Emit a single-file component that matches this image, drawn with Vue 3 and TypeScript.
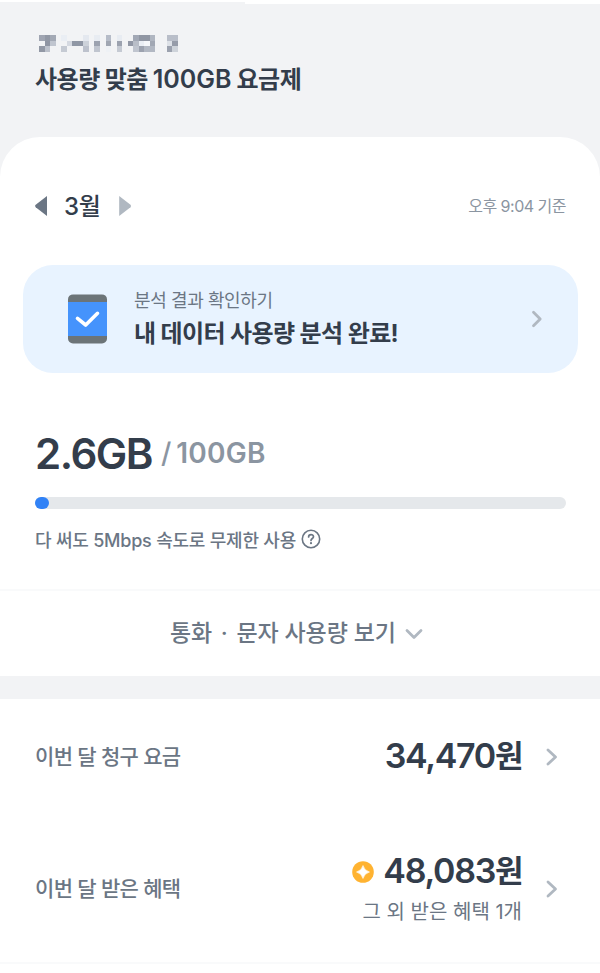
<script setup lang="ts">
const _ = '#f2f3f5'
const mosaic: string[][] = [
  ['#a0a5b2', '#9298a5', '#a3a9b5', _, '#eaeef4', _, _, _, '#e4e8ef', _, '#e8ecf2', _, '#b6bcc8', _, '#e8ecf2', _, _, '#a2a8b5', '#9096a3', '#9096a3', '#b0b6c1', _, _, '#b9bec9', '#b9bec9'],
  [_, '#8f95a3', '#c0c5cf', _, _, '#d5d9e1', '#9097a5', '#9097a5', '#cdd2da', _, '#9ca2af', _, '#a0a6b2', _, '#9ca2af', _, '#9298a6', '#b9bec8', '#eaeef4', '#f5f7fa', '#a2a8b4', _, _, '#dde1e7', '#969ca9'],
  ['#9298a5', '#bcc1cb', _, _, '#c5cad3', _, _, _, '#bdc2cd', _, '#c0c5cf', _, '#eef1f5', _, '#c5cad3', _, _, '#c0c5cf', '#9ca2af', '#b2b8c3', '#b2b8c3', _, _, '#9ca2af', '#ced3da'],
]
const used = 2.6
const total = 100
</script>

<template>
  <main class="screen">
    <header class="top">
      <div class="top-edge"></div>
      <div class="mosaic">
        <template v-for="(row, r) in mosaic" :key="r">
          <i v-for="(c, k) in row" :key="k" :style="{ background: c }"></i>
        </template>
      </div>
      <h1 class="plan">사용량 맞춤 <span class="plan-size">100GB</span> 요금제</h1>
    </header>

    <section class="usage">
      <div class="month-row">
        <svg width="13" height="20" viewBox="0 0 13 20"><path d="M12 0v20L.7 11.200q-1.200-1.200 0-2.400z" fill="#6b7684" /></svg>
        <span class="month">3월</span>
        <svg width="13" height="20" viewBox="0 0 13 20"><path d="M.2 0v20l11.300-8.800q1.200-1.200 0-2.400z" fill="#b0b8c1" /></svg>
        <span class="time">오후 9:04 기준</span>
      </div>

      <div class="banner">
        <svg width="40" height="50" viewBox="0 0 40 50">
          <rect x="0" y=".4" width="39" height="49" rx="5" fill="#6c7478" />
          <rect x="0" y="8" width="39" height="34" fill="#4593fc" />
          <path d="M9.500 24.300l8.200 6.700L29.500 19.300" fill="none" stroke="#fff" stroke-width="3.600" stroke-linecap="round" stroke-linejoin="round" />
        </svg>
        <div class="banner-text">
          <span class="banner-sub">분석 결과 확인하기</span>
          <strong class="banner-title">내 데이터 사용량 분석 완료!</strong>
        </div>
        <svg class="chev" width="12" height="18" viewBox="0 0 12 18"><path d="M2.500 2.300l6.700 6.700-6.700 6.700" /></svg>
      </div>

      <div class="amount"><strong class="used">{{ used }}GB</strong><span class="slash">/</span><span class="total">{{ total }}GB</span></div>
      <div class="bar"><div class="fill" :style="{ width: (used / total) * 100 + '%' }"></div></div>
      <div class="note">
        <span class="note-text">다 써도 5Mbps 속도로 무제한 사용</span>
        <svg width="20" height="20" viewBox="0 0 20 20" fill="none" stroke="#6b7684" stroke-linecap="round">
          <circle cx="10" cy="10" r="8.700" stroke-width="1.600" />
          <path d="M7.600 8c0-3.200 4.900-3 4.900-.2C12.500 9.500 10 9.600 10 11.500" stroke-width="1.700" />
          <circle cx="10" cy="14.200" r=".5" stroke-width="1.200" />
        </svg>
      </div>
    </section>

    <div class="more">
      <span class="more-text">통화<span class="dot">·</span>문자 사용량 보기</span>
      <svg class="chev" width="18" height="12" viewBox="0 0 18 12"><path d="M2 2.500l7 7 7-7" /></svg>
    </div>

    <div class="gap"></div>

    <div class="row bill">
      <span class="label">이번 달 청구 요금</span>
      <strong class="price">34,470<span class="won">원</span></strong>
      <svg class="chev" width="12" height="18" viewBox="0 0 12 18"><path d="M2 2l7.500 7L2 16" /></svg>
    </div>

    <div class="row benefit">
      <span class="label">이번 달 받은 혜택</span>
      <div class="benefit-val">
        <div class="benefit-top">
          <svg width="22" height="22" viewBox="0 0 22 22">
            <circle cx="11" cy="11" r="10.800" fill="#ffb331" />
            <path d="M11 4.500Q12.400 9.600 17.500 11 12.400 12.400 11 17.500 9.600 12.400 4.500 11 9.600 9.600 11 4.500z" fill="#fff" stroke="#fff" stroke-width=".6" stroke-linejoin="round" />
          </svg>
          <strong class="price">48,083<span class="won">원</span></strong>
        </div>
        <span class="etc">그 외 받은 혜택 1개</span>
      </div>
      <svg class="chev" width="12" height="18" viewBox="0 0 12 18"><path d="M2 2l7.500 7L2 16" /></svg>
    </div>
    <div class="line"></div>
  </main>
</template>

<style>
body { margin: 0; background: #fff; }
</style>

<style scoped>
.screen {
  width: 600px; height: 973px; overflow: hidden; background: #fff; box-sizing: border-box;
  font-family: Inter, "Noto Sans CJK KR", sans-serif; color: #333d4b; white-space: nowrap;
}
h1, strong { margin: 0; }
svg { display: block; flex: none; }
.top { height: 176px; background: #f2f3f5; box-sizing: border-box; border-top: 2px solid #fff; }
.top-edge { width: 355px; height: 2px; background: #fff; margin-left: auto; }
.mosaic { display: grid; grid-template-columns: repeat(25, 5.560px); grid-template-rows: repeat(3, 5.600px); margin: 31px 0 0 39px; }
.plan { font-size: 24px; font-weight: 600; line-height: 34px; margin: 10px 0 0 35px; letter-spacing: -0.5px; word-spacing: -0.6px; }
.plan-size { font-size: 25px; letter-spacing: 0; }
.usage { margin-top: -39px; height: 454px; padding: 54px 34px 0 35px; background: #fff; border-radius: 40px 40px 0 0; box-sizing: border-box; border-bottom: 2px solid #f9fafb; }
.month-row { display: flex; align-items: center; height: 30px; }
.month { font-size: 24px; font-weight: 500; margin: 0 18px 0 16px; padding-bottom: 3px; letter-spacing: -0.3px; }
.time { margin-left: auto; font-size: 16px; color: #8b95a1; letter-spacing: -0.5px; padding-bottom: 2px; }
.banner { margin: 44px -12px 0; height: 108px; border-radius: 30px; background: #e8f3ff; display: flex; align-items: center; padding: 0 35px 0 45px; box-sizing: border-box; }
.banner-text { display: flex; flex-direction: column; margin: 1px auto 0 26px; }
.banner-sub { font-size: 18px; line-height: 28px; color: #6b7684; letter-spacing: -0.4px; }
.banner-title { font-size: 24px; line-height: 37px; font-weight: 700; letter-spacing: -0.6px; }
.chev { fill: none; stroke: #b0b8c1; stroke-width: 2.800; stroke-linecap: round; stroke-linejoin: round; }
.amount { display: flex; align-items: center; height: 50px; line-height: 50px; margin-top: 56px; }
.used { font-size: 42px; font-weight: 600; letter-spacing: -1.500px; }
.slash, .total { font-size: 28px; font-weight: 500; color: #8b95a1; padding-bottom: 2px; }
.slash { margin: 0 5px 0 9px; }
.total { font-weight: 600; letter-spacing: 0.250px; }
.bar { height: 12px; border-radius: 6px; background: #e5e8eb; margin-top: 18px; }
.fill { height: 12px; border-radius: 6px; background: #3182f6; }
.note { display: flex; align-items: center; gap: 5px; margin-top: 16px; height: 28px; }
.note-text { font-size: 18px; font-weight: 500; color: #6b7684; letter-spacing: -0.220px; padding-bottom: 1px; }
.more { height: 85px; display: flex; align-items: center; padding-left: 170px; gap: 9px; }
.more-text { font-size: 23px; font-weight: 500; color: #6b7684; letter-spacing: -0.1px; padding-bottom: 5px; }
.dot { margin: 0 8.700px; }
.gap { height: 23px; background: #f2f3f5; }
.row { display: flex; align-items: center; padding: 0 42px 0 35px; }
.bill { height: 116px; }
.benefit { height: 147px; }
.label { font-size: 21px; font-weight: 500; color: #6b7684; margin-right: auto; letter-spacing: -0.650px; padding-bottom: 4px; }
.price { font-size: 34px; font-weight: 600; line-height: 44px; letter-spacing: -1.300px; padding-bottom: 2px; }
.won { font-size: 31px; letter-spacing: -0.5px; line-height: 1; position: relative; top: -1px; }
.row .chev { margin-left: 23px; }
.benefit-val { display: flex; flex-direction: column; align-items: flex-end; }
.benefit-top { display: flex; align-items: center; gap: 9px; }
.etc { font-size: 20px; line-height: 34px; color: #6b7684; letter-spacing: 0; padding-right: 1px; }
.line { height: 2px; background: #f9fafb; }
</style>
